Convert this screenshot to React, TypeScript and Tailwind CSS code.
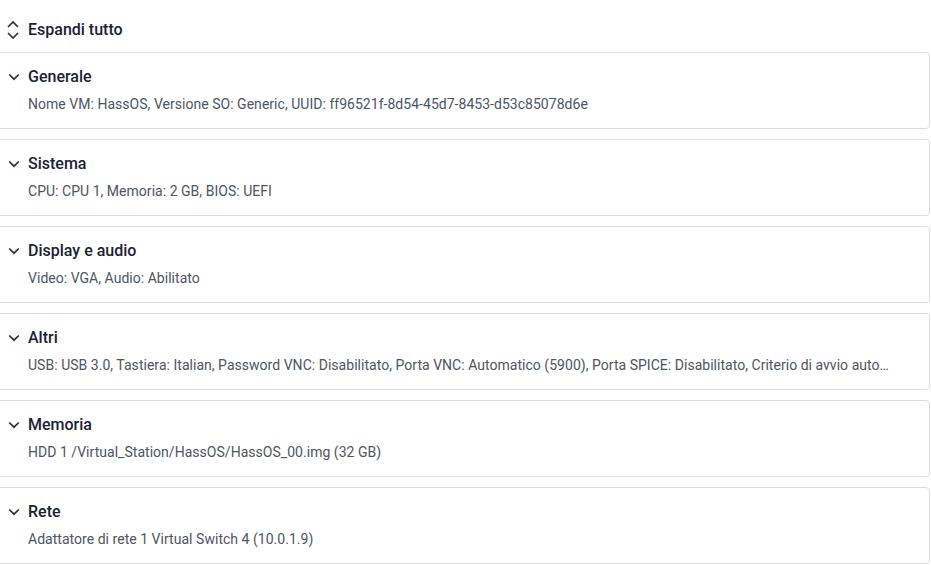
const sections = [
  { title: "Generale", detail: "Nome VM: HassOS, Versione SO: Generic, UUID: ff96521f-8d54-45d7-8453-d53c85078d6e" },
  { title: "Sistema", detail: "CPU: CPU 1, Memoria: 2 GB, BIOS: UEFI" },
  { title: "Display e audio", detail: "Video: VGA, Audio: Abilitato" },
  {
    title: "Altri",
    detail:
      "USB: USB 3.0, Tastiera: Italian, Password VNC: Disabilitato, Porta VNC: Automatico (5900), Porta SPICE: Disabilitato, Criterio di avvio automatico: Ultimo stato",
  },
  { title: "Memoria", detail: "HDD 1 /Virtual_Station/HassOS/HassOS_00.img (32 GB)" },
  { title: "Rete", detail: "Adattatore di rete 1 Virtual Switch 4 (10.0.1.9)" },
];

function ChevronDownIcon() {
  return (
    <svg width="12" height="8" viewBox="0 0 12 8" className="ml-[7px] mr-[8px] text-[#2a3140]">
      <polyline points="1.2,1.5 6,6.2 10.8,1.5" fill="none" stroke="currentColor" strokeWidth="1.7" />
    </svg>
  );
}

function ExpandIcon() {
  return (
    <svg width="14" height="20" viewBox="0 0 14 20" className="ml-[6px] mr-[8px] text-[#2a3140]">
      <polyline points="2,7 7,2 12,7" fill="none" stroke="currentColor" strokeWidth="1.7" />
      <polyline points="2,13 7,18 12,13" fill="none" stroke="currentColor" strokeWidth="1.7" />
    </svg>
  );
}

function Section({ title, detail }: { title: string; detail: string }) {
  return (
    <div className="-ml-2 mr-px rounded border border-[#dcdde0] bg-white pl-2 pr-[29px] pt-[12px] pb-[14px]">
      <div className="flex h-6 items-center">
        <ChevronDownIcon />
        <span className="text-[16px] font-medium text-[#1b2233]">{title}</span>
      </div>
      <div className="mt-[5px] truncate pl-[27px] text-[14px] tracking-[0.03px] leading-5 text-[#4e5563]">
        {detail}
      </div>
    </div>
  );
}

export default function App() {
  return (
    <div
      className="h-[565px] w-[931px] overflow-hidden bg-white"
      style={{ fontFamily: "Roboto, 'Noto Sans', sans-serif" }}
    >
      {/* toolbar */}
      <div className="flex h-[52px] items-center pt-[8px]">
        <ExpandIcon />
        <span className="text-[16px] font-medium text-[#1b2233]">Espandi tutto</span>
      </div>

      {/* sections */}
      <div className="flex flex-col gap-[10px]">
        {sections.map((s) => (
          <Section key={s.title} title={s.title} detail={s.detail} />
        ))}
      </div>
    </div>
  );
}
